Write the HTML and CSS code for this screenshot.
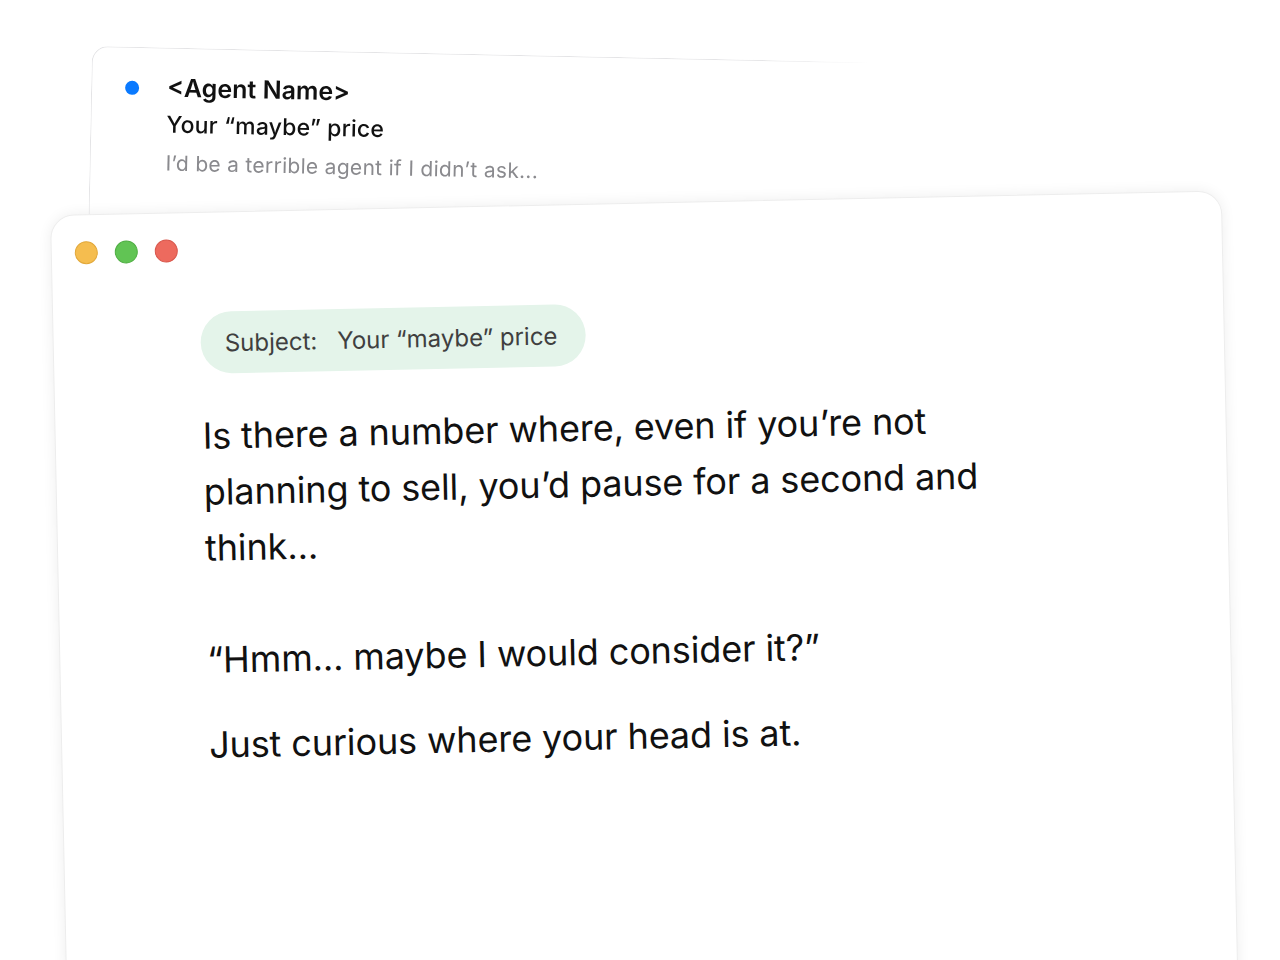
FILE: index.html
```html
<!DOCTYPE html>
<html lang="en">
<head>
  <meta charset="UTF-8" />
  <title>Your “maybe” price</title>
  <link rel="stylesheet" href="styles.css">
</head>
<body>

  <div class="stage">

    <!-- Inbox preview behind the window -->
    <div class="mail-preview">
      <span class="unread-dot"></span>
      <div class="preview-text">
        <div class="sender">&lt;Agent Name&gt;</div>
        <div class="subject">Your “maybe” price</div>
        <div class="snippet">I’d be a terrible agent if I didn’t ask...</div>
      </div>
    </div>

    <!-- Open message window -->
    <div class="window">
      <div class="titlebar">
        <span class="light yellow"></span>
        <span class="light green"></span>
        <span class="light red"></span>
      </div>

      <div class="content">
        <div class="subject-pill">
          <span class="label">Subject:</span>
          <span>Your “maybe” price</span>
        </div>

        <p class="body-text first">Is there a number where, even if you’re not planning to sell, you’d pause for a second and think...</p>
        <p class="body-text second">“Hmm... maybe I would consider it?”</p>
        <p class="body-text">Just curious where your head is at.</p>
      </div>
    </div>

  </div>

</body>
</html>
```

FILE: styles.css
```css
body {
  margin: 0;
  padding: 0;
  background-color: #ffffff;
  font-family: Inter, "Noto Sans", sans-serif;
  color: #111111;
}
.stage {
  position: relative;
  width: 1280px;
  height: 960px;
  overflow: hidden;
}

/* Inbox preview */
.mail-preview {
  position: absolute;
  left: 92px;
  top: 46px;
  width: 1000px;
  height: 260px;
  box-sizing: border-box;
  display: flex;
  padding: 32px 0 0 33px;
  background-color: #ffffff;
  border: 1px solid #e4e4e6;
  border-radius: 16px;
  transform-origin: top left;
  transform: rotate(1.2deg);
  -webkit-mask-image: linear-gradient(66deg, #000 70%, transparent 80%);
  mask-image: linear-gradient(66deg, #000 70%, transparent 80%);
}
.unread-dot {
  width: 14px;
  height: 14px;
  border-radius: 50%;
  background-color: #0a7aff;
  flex-shrink: 0;
  margin-top: 1px;
}
.preview-text {
  margin-left: 28px;
  margin-top: -11px;
}
.sender {
  font-size: 25px;
  font-weight: 600;
  line-height: 36px;
  color: #111;
}
.subject {
  font-size: 23px;
  font-weight: 500;
  letter-spacing: 0.2px;
  line-height: 38px;
  color: #111;
}
.snippet {
  margin-top: 2px;
  font-size: 21px;
  letter-spacing: 0.3px;
  line-height: 36px;
  color: #8a8a8e;
}

/* Message window */
.window {
  position: absolute;
  left: 50px;
  top: 215px;
  width: 1170px;
  height: 900px;
  background-color: #ffffff;
  border: 1px solid #ededed;
  border-radius: 24px;
  box-shadow: 0 0 14px rgba(0, 0, 0, 0.07);
  transform-origin: top left;
  transform: rotate(-1.2deg);
}
.titlebar {
  display: flex;
  gap: 17px;
  padding: 26px 0 0 23px;
}
.light {
  width: 23px;
  height: 23px;
  border-radius: 50%;
  box-sizing: border-box;
}
.yellow {
  background-color: #f5bd4f;
  border: 1px solid #e2a83a;
}
.green {
  background-color: #61c454;
  border: 1px solid #4fae43;
}
.red {
  background-color: #ed6a5e;
  border: 1px solid #d8574c;
}
.content {
  padding: 50px 0 0 147px;
}
.subject-pill {
  display: inline-flex;
  align-items: center;
  height: 62px;
  padding: 0 28px 0 24px;
  border-radius: 31px;
  background-color: #e4f4ea;
  font-size: 24px;
  color: #3f3f3f;
}
.subject-pill .label {
  margin-right: 20px;
}
.body-text {
  width: 800px;
  margin: 0 0 29px 0;
  font-size: 36px;
  letter-spacing: -0.12px;
  line-height: 56px;
  color: #111111;
}
.body-text.first {
  margin-top: 34px;
  margin-bottom: 56px;
}
```
